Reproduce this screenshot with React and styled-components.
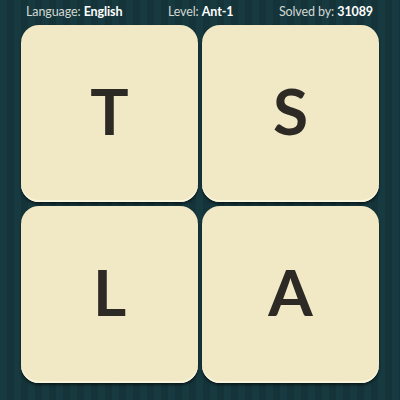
import styled, { createGlobalStyle } from "styled-components";

const GlobalStyle = createGlobalStyle`
    html, body {
        margin: 0;
        padding: 0;
        background: #16353a;
    }
`;

const tiles = ["T", "S", "L", "A"];

export default function App() {
    return (
        <Page>
            <GlobalStyle />
            <InfoBar>
                <Info>Language: <strong>English</strong></Info>
                <Info>Level: <strong>Ant-1</strong></Info>
                <Info>Solved by: <strong>31089</strong></Info>
            </InfoBar>

            <Board>
                {tiles.map((letter) => (
                    <Tile key={letter}>{letter}</Tile>
                ))}
            </Board>
        </Page>
    );
}

const Page = styled.div`
    width: 400px;
    height: 400px;
    overflow: hidden;
    display: flex;
    flex-direction: column;
    background: repeating-linear-gradient(
        90deg,
        #173a40 0px,
        #173a40 7px,
        #14343a 7px,
        #14343a 14px
    );
    font-family: Lato, "Open Sans", sans-serif;
`;

const InfoBar = styled.div`
    height: 22px;
    display: flex;
    align-items: center;
    justify-content: space-between;
    padding: 0 27px 0 26px;
`;

const Info = styled.span`
    font-size: 12.5px;
    color: #d3d8d2;
    letter-spacing: -0.1px;

    strong {
        color: #ffffff;
        font-weight: 700;
    }
`;

const Board = styled.div`
    display: grid;
    grid-template-columns: 177px 177px;
    grid-template-rows: 177px 177px;
    gap: 4px;
    padding: 3px 0 0 21px;
`;

const Tile = styled.div`
    display: flex;
    align-items: center;
    justify-content: center;
    padding-bottom: 5px;
    background: #f1e9c5;
    border-radius: 18px;
    box-shadow: inset 0 -2px 0 #f9f4dc, 0 2px 3px rgba(0, 0, 0, 0.55);
    color: #2d2a26;
    font-size: 64px;
    font-weight: 700;
    line-height: 1;
`;
